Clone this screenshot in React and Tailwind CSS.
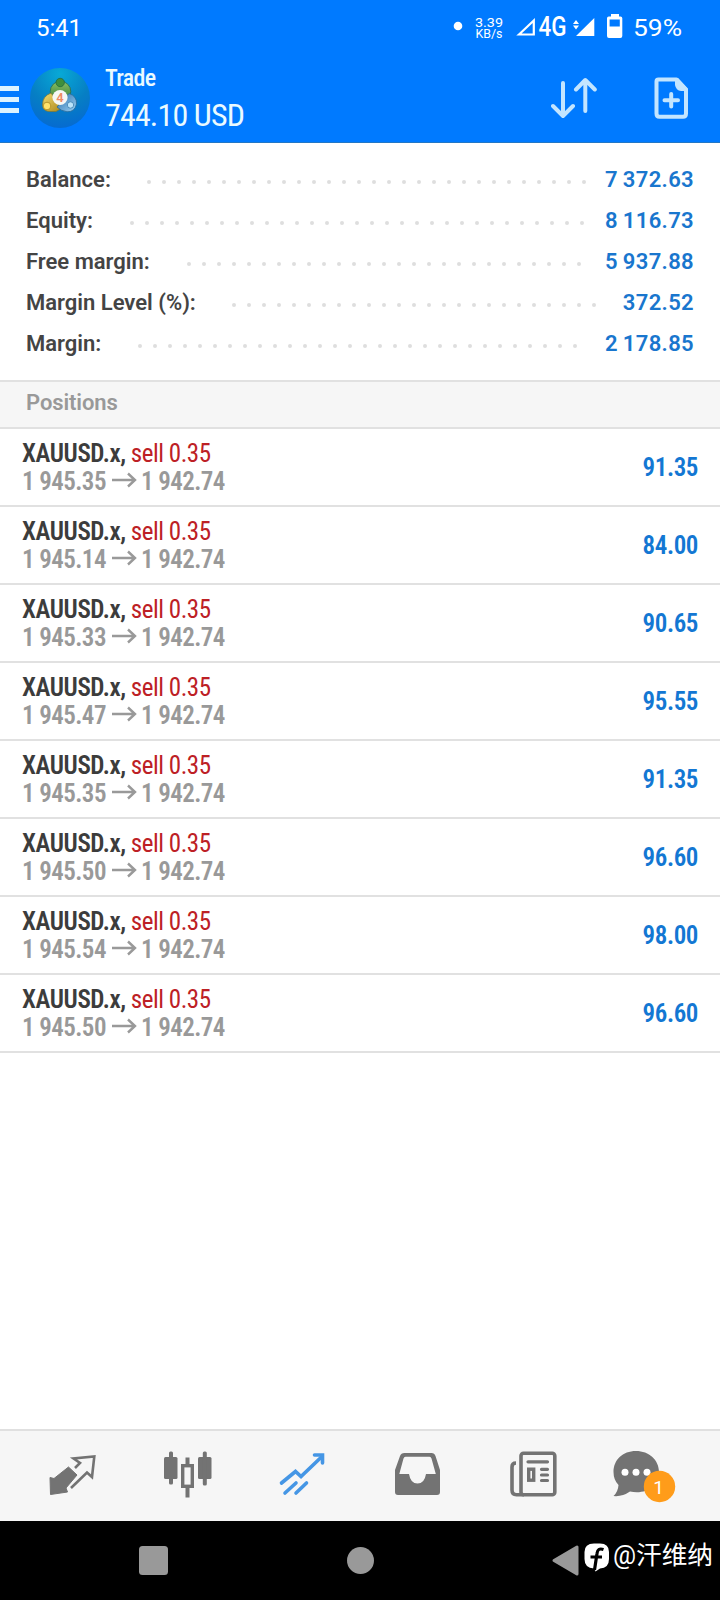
import React from 'react';

const summary = [
    { label: 'Balance:', value: '7 372.63', labelWidth: 'w-[121px]', dots: 30 },
    { label: 'Equity:', value: '8 116.73', labelWidth: 'w-[104px]', dots: 31 },
    { label: 'Free margin:', value: '5 937.88', labelWidth: 'w-[161px]', dots: 27 },
    { label: 'Margin Level (%):', value: '372.52', labelWidth: 'w-[206px]', dots: 25 },
    { label: 'Margin:', value: '2 178.85', labelWidth: 'w-[112px]', dots: 30 },
];

const positions = [
    { open: '1 945.35', profit: '91.35' },
    { open: '1 945.14', profit: '84.00' },
    { open: '1 945.33', profit: '90.65' },
    { open: '1 945.47', profit: '95.55' },
    { open: '1 945.35', profit: '91.35' },
    { open: '1 945.50', profit: '96.60' },
    { open: '1 945.54', profit: '98.00' },
    { open: '1 945.50', profit: '96.60' },
];

function StatusBar() {
    return (
        <div className="flex h-[56px] items-center pl-[36px] text-white">
            <span className="w-[404px] text-[24px] leading-6 tracking-[-0.1px]">5:41</span>
            <svg width="280" height="56" viewBox="440 0 280 56" fill="#fff">
                <circle cx="458" cy="26" r="4.3" />
                <text x="475" y="26.5" fontSize="12.5" textLength="28" lengthAdjust="spacingAndGlyphs">3.39</text>
                <text x="475.5" y="38" fontSize="12" textLength="27" lengthAdjust="spacingAndGlyphs">KB/s</text>
                <path d="M519 34.5 533.8 20.5V34.5Z" fill="none" stroke="#fff" strokeWidth="2.2" />
                <text x="538.5" y="36" fontSize="27.5" fontWeight="500" textLength="28" lengthAdjust="spacingAndGlyphs">4G</text>
                <path d="M576 36 594.3 18V36ZM573 24l3-4 3 4ZM573 25.5h6l-3 4Z" />
                <path fillRule="evenodd" d="M611 14h8v2.5h1.5q1.8 0 1.8 1.8V36q0 2-2 2H609q-2 0-2-2V18.3q0-1.8 1.8-1.8H611ZM609.6 19.5V26.5H619.8V19.5Z" />
                <text x="633" y="36" fontSize="24" textLength="49" lengthAdjust="spacingAndGlyphs">59%</text>
            </svg>
        </div>
    );
}

function AppLogo() {
    return (
        <svg width="60" height="60" viewBox="0 0 60 60">
            <defs>
                <radialGradient id="logoBg" cx=".5" cy=".1" r=".95">
                    <stop offset="0" stopColor="#08a9d6" />
                    <stop offset=".55" stopColor="#067fc4" />
                    <stop offset="1" stopColor="#0668d2" />
                </radialGradient>
                <linearGradient id="green" x2="0" y2="1">
                    <stop offset="0" stopColor="#8cc063" />
                    <stop offset="1" stopColor="#2e7b37" />
                </linearGradient>
                <linearGradient id="gold" x2="1" y2="1">
                    <stop offset="0" stopColor="#f4de72" />
                    <stop offset="1" stopColor="#a98518" />
                </linearGradient>
                <linearGradient id="blue" x2="1" y2="1">
                    <stop offset="0" stopColor="#2a6fae" />
                    <stop offset="1" stopColor="#9bd0f2" />
                </linearGradient>
            </defs>
            <circle cx="30" cy="30" r="30" fill="url(#logoBg)" />
            <circle cx="30.5" cy="23.5" r="10.3" fill="url(#green)" stroke="#2c6b4c" strokeWidth=".8" />
            <path d="M21 25Q12.5 28 12.5 37 13 44 21 43.5H26L32 40Z" fill="url(#gold)" stroke="#7b7a3a" strokeWidth=".8" />
            <path d="M39 25.5Q47 28 46.5 36 45 44 37 43.8 31 43 27 39Z" fill="url(#blue)" stroke="#286b9b" strokeWidth=".8" />
            <circle cx="30.2" cy="14.5" r="4.2" fill="#3f8f3d" stroke="#23683f" strokeWidth=".8" />
            <circle cx="17" cy="38" r="3.8" fill="#ffe26a" stroke="#a8861f" strokeWidth=".8" />
            <circle cx="40.5" cy="37" r="3.2" fill="#bce4fa" stroke="#3b7fb0" strokeWidth=".8" />
            <circle cx="30" cy="29.5" r="7.6" fill="#f5f7f4" />
            <text x="30" y="34.3" textAnchor="middle" fontSize="13" fontWeight="600" fill="#ee8a64">4</text>
        </svg>
    );
}

function Header() {
    return (
        <header className="h-[143px] border-b border-[#2377c5] bg-[#007aff]">
            <StatusBar />
            <div className="flex items-start text-white">
                <div className="mt-[30px] flex w-[19px] flex-col gap-[6px]">
                    <span className="h-[5px] bg-[#dcf3ff]" />
                    <span className="h-[5px] bg-[#dcf3ff]" />
                    <span className="h-[5px] bg-[#dcf3ff]" />
                </div>
                <div className="ml-[11px] mt-3">
                    <AppLogo />
                </div>
                <div className="ml-[15px] mt-[8px] w-[446px] text-[#eafaff] font-stretch-condensed">
                    <p className="text-[24px] font-medium leading-[28px] tracking-[-0.7px]">Trade</p>
                    <p className="mt-[4px] text-[32px] leading-[38px] tracking-[-0.85px]">744.10 USD</p>
                </div>
                <svg className="mt-[21px]" width="46" height="44" viewBox="0 0 46 44" fill="none" stroke="#c3e5ff" strokeWidth="4" strokeLinecap="round" strokeLinejoin="round">
                    <path d="M12 6V38.5M2 29l10 10 10-10M34.3 34V3.5M25 12.5 34.3 3l9.5 9.5" />
                </svg>
                <svg className="ml-[57px] mt-[21px]" width="35" height="44" viewBox="0 0 35 44">
                    <path d="M4.5 2.5H22.5L32 12.5V36.5Q32 39.8 29 39.8H5.5Q2.5 39.8 2.5 36.5V4.5Q2.5 2.5 4.5 2.5Z" fill="none" stroke="#c3e5ff" strokeWidth="4" strokeLinejoin="round" />
                    <path d="M21 1.5V8Q22 13.5 27 14H34V12L24 1Z" fill="#c3e5ff" />
                    <path d="M17.2 17V29.5M10.5 23.2H24" stroke="#c3e5ff" strokeWidth="4" strokeLinecap="round" />
                </svg>
            </div>
        </header>
    );
}

function AccountSummary() {
    return (
        <section className="h-[237px] px-[26px] pt-[16px]">
            {summary.map((row) => (
                <div key={row.label} className="flex h-[41px] items-center whitespace-nowrap text-[22px] font-semibold">
                    <span className={`${row.labelWidth} shrink-0 text-[#444]`}>{row.label}</span>
                    <span className="mt-[4px] flex gap-[11px]">
                        {Array.from({ length: row.dots }, (_, i) => (
                            <span key={i} className="size-1 rounded-full bg-[#dedede]" />
                        ))}
                    </span>
                    <span className="ml-auto tracking-[0.35px] [word-spacing:-1px] text-[#1976ce]">{row.value}</span>
                </div>
            ))}
        </section>
    );
}

function Position({ open, profit }) {
    return (
        <li className="flex h-[78px] items-center justify-between border-b-2 border-[#e1e1e1] px-[22px] font-stretch-condensed">
            <div className="pt-[2px] text-[25px] leading-[28px]">
                <p className="flex gap-[5px]">
                    <span className="font-semibold tracking-[-0.4px] text-[#3c3c3c]">XAUUSD.x,</span>
                    <span className="tracking-[-0.45px] text-[#bd2025]">sell 0.35</span>
                </p>
                <p className="flex items-center font-semibold tracking-[-0.55px] text-[#999]">
                    <span>{open}</span>
                    <svg className="mb-[2px] ml-[6px] mr-[4px]" width="25" height="18" viewBox="0 0 25 18" fill="none" stroke="#999" strokeWidth="2.4">
                        <path d="M0 8H23M16 1.5 23 8 16 14.5" />
                    </svg>
                    <span>1 942.74</span>
                </p>
            </div>
            <span className="pt-[2px] text-[25px] font-semibold tracking-[-0.4px] text-[#1377d3]">{profit}</span>
        </li>
    );
}

function TabBar() {
    return (
        <nav className="h-[92px] border-t-2 border-[#e0e0e0] bg-[#f6f6f6]">
            <svg width="720" height="90" viewBox="0 1431 720 90" fill="none" stroke="#737373">
                {/* Quotes */}
                <path d="M68.5 1467 77 1475 66 1488 67.5 1492 50.5 1494.5 50 1477.5 54 1478.5Z" fill="#737373" stroke="#737373" strokeWidth="1" />
                <path d="M75 1468 80 1463 73.5 1458.5 94.3 1456.5 92 1477 87 1472.5 71 1488" strokeWidth="2.6" />
                {/* Charts */}
                <g fill="#737373" stroke="none">
                    <rect x="164" y="1457" width="13.5" height="22" rx="1.5" />
                    <rect x="169" y="1451.5" width="4" height="33" rx="1.5" />
                    <rect x="198" y="1457" width="13.5" height="22" rx="1.5" />
                    <rect x="202.8" y="1451.5" width="4" height="34" rx="1.5" />
                    <path d="M185.5 1457.5h4V1464h-4ZM185.5 1487h4v10.5h-4Z" />
                </g>
                <rect x="182.7" y="1465.7" width="9.6" height="20.6" strokeWidth="3.4" />
                {/* Trade */}
                <g stroke="#4596e5" strokeWidth="3.6" strokeLinecap="round">
                    <path d="M281.5 1483 295.5 1471.5 301 1476.5 322 1456.5" />
                    <path d="M314.5 1455H322.5V1463" />
                    <path d="M285 1493 296 1483M296 1493 306.5 1483" />
                </g>
                {/* History */}
                <path fillRule="evenodd" stroke="none" fill="#737373" d="M404.5 1453H431.5Q434.5 1453 435.5 1456L440 1470V1492Q440 1495 437 1495H398Q395 1495 395 1492V1470L400 1456Q401 1453 404.5 1453ZM405.5 1456.8Q404 1456.8 403.5 1458.5L399.3 1474H409Q410.5 1483.5 417.5 1483.5 424.5 1483.5 426 1474H435.8L431.5 1458.5Q431 1456.8 429.5 1456.8Z" />
                {/* News */}
                <g strokeWidth="3.6">
                    <rect x="521" y="1453.3" width="33.8" height="41.4" rx="2.5" />
                    <path d="M516 1463Q512 1463 512 1467V1490Q512 1494.7 516.5 1494.7H524" />
                    <path d="M528 1461.8H547.5M541.5 1469.3H547.5M541.5 1475H547.5M541.5 1480.5H547.5" strokeLinecap="round" strokeWidth="3.2" />
                    <rect x="528.7" y="1469.2" width="5" height="11" strokeWidth="3.4" />
                </g>
                {/* Messages */}
                <g stroke="none">
                    <path d="M636 1451C622.5 1451 613.5 1460 613.5 1472Q613.5 1480 618.5 1485 618 1492 613.5 1496Q622 1497 630 1491.5C646 1495 659 1486 659 1472 659 1460 649 1451 636 1451Z" fill="#737373" />
                    <g fill="#fff">
                        <circle cx="625" cy="1472.3" r="3.5" />
                        <circle cx="636" cy="1472.3" r="3.5" />
                        <circle cx="647" cy="1472.3" r="3.5" />
                    </g>
                    <circle cx="659.5" cy="1486.5" r="15.7" fill="#ff9c1a" />
                    <text x="658.5" y="1493.5" textAnchor="middle" fontSize="19" fill="#fff">1</text>
                </g>
            </svg>
        </nav>
    );
}

function SystemNav() {
    return (
        <footer className="h-[79px] bg-black">
            <svg width="720" height="79" viewBox="0 1521 720 79" fill="#999">
                <rect x="139" y="1546" width="29" height="29" rx="3.5" />
                <circle cx="360.5" cy="1560.5" r="13.5" />
                <path d="M554 1560.5 577 1547V1574Z" stroke="#999" strokeWidth="3" strokeLinejoin="round" />
                <path d="M594 1543.5H600Q609 1543.5 609 1552V1559Q609 1568 600 1568.5L595.5 1571.5 594 1568.5Q584.5 1568 584.5 1559V1552Q584.5 1543.5 594 1543.5Z" fill="#fff" />
                <path d="M603.5 1549.5Q597.5 1547.5 597 1553.5L594.5 1570M590.5 1557H602" fill="none" stroke="#000" strokeWidth="3.2" />
                <text x="613" y="1563.5" fontSize="25" textLength="100" lengthAdjust="spacingAndGlyphs" fill="#fff" className="font-['Roboto','Noto_Sans_CJK_SC',sans-serif]">@汗维纳</text>
            </svg>
        </footer>
    );
}

function App() {
    return (
        <div className="flex h-[1600px] w-[720px] flex-col overflow-hidden bg-white font-['Roboto',sans-serif]">
            <Header />
            <AccountSummary />
            <h2 className="h-[49px] border-y-2 border-[#e1e1e1] bg-[#f6f6f6] pl-[26px] pt-[5px] text-[22px] font-semibold leading-8 tracking-[-0.1px] text-[#999]">Positions</h2>
            <ul className="flex-1">
                {positions.map((position, i) => (
                    <Position key={i} {...position} />
                ))}
            </ul>
            <TabBar />
            <SystemNav />
        </div>
    );
}

export default App;
